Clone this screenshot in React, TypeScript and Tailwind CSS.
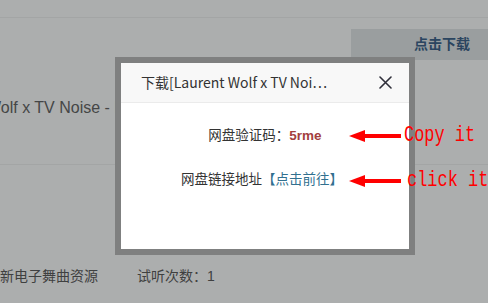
import React from 'react';

const cjk = "font-['Liberation_Sans','Noto_Sans_CJK_SC',sans-serif]";

// 红色箭头标注
const Arrow: React.FC<{ top: number }> = ({ top }) => (
  <svg
    className="absolute"
    style={{ left: 349, top: top - 6 }}
    width="52"
    height="12"
    viewBox="0 0 52 12"
  >
    <polygon points="0,6 16,0 16,12" fill="#ff0000" />
    <rect x="14" y="4" width="38" height="4" fill="#ff0000" />
  </svg>
);

const Note: React.FC<{ left: number; top: number; text: string }> = ({
  left,
  top,
  text,
}) => (
  <span
    className="absolute text-[22px] leading-none text-[#ff0000] font-['Liberation_Mono',monospace] origin-left scale-x-[0.77] whitespace-pre"
    style={{ left, top }}
  >
    {text}
  </span>
);

const App: React.FC = () => {
  return (
    <div
      className={`relative w-[488px] h-[303px] overflow-hidden bg-[#acaeae] ${cjk}`}
    >
      {/* 页面内容（遮罩下） */}
      <div className="h-[18px] border-b border-[#a3a5a5]" />
      <div className="h-[147px] pt-[11px] border-b border-[#a3a5a5]">
        <div className="flex">
          <div className="ml-[351px] w-[182px] h-[31px] shrink-0 flex items-center justify-center bg-[#9a9e9f] text-[14px] font-bold text-[#2b4560]">
            点击下载
          </div>
        </div>
        <div className="mt-[37px] ml-[-14px] h-[22px] leading-[22px] text-[16px] text-[#454646] whitespace-nowrap">
          Wolf x TV Noise - Night Drive
        </div>
      </div>
      <div className="mt-[101px] flex h-[20px] items-center text-[14px] text-[#3f4040] whitespace-nowrap">
        <span>新电子舞曲资源</span>
        <span className="ml-[39px]">试听次数：1</span>
      </div>

      {/* 弹窗 */}
      <div className="absolute left-[115px] top-[57px] w-[300px] h-[198px] border-[6px] border-[#7f8080] bg-white flex flex-col">
        <div className="h-[40px] shrink-0 flex items-center justify-between pl-[20px] pr-[17px] bg-[#f8f8f8] border-b border-[#ebebeb]">
          <span className="text-[14px] text-[#333] whitespace-nowrap font-['Noto_Sans_CJK_SC',sans-serif]">
            下载[Laurent Wolf x TV Noi…
          </span>
          <svg width="13" height="13" viewBox="0 0 13 13">
            <path
              d="M1 1L12 12M12 1L1 12"
              stroke="#2f2f3a"
              strokeWidth="1.6"
              strokeLinecap="round"
            />
          </svg>
        </div>
        <div className="flex flex-col items-center pt-[23px] gap-[24px] text-[13.5px] text-[#333]">
          <div className="h-[20px] leading-[20px]">
            网盘验证码：
            <span className="font-bold text-[#a3403e]">5rme</span>
          </div>
          <div className="h-[20px] leading-[20px] pr-[6px]">
            网盘链接地址
            <span className="text-[#31708f]">【点击前往】</span>
          </div>
        </div>
      </div>

      {/* 标注 */}
      <Arrow top={136} />
      <Arrow top={181} />
      <Note left={404} top={125} text="Copy it" />
      <Note left={407} top={170} text="click it" />
    </div>
  );
};

export default App;
